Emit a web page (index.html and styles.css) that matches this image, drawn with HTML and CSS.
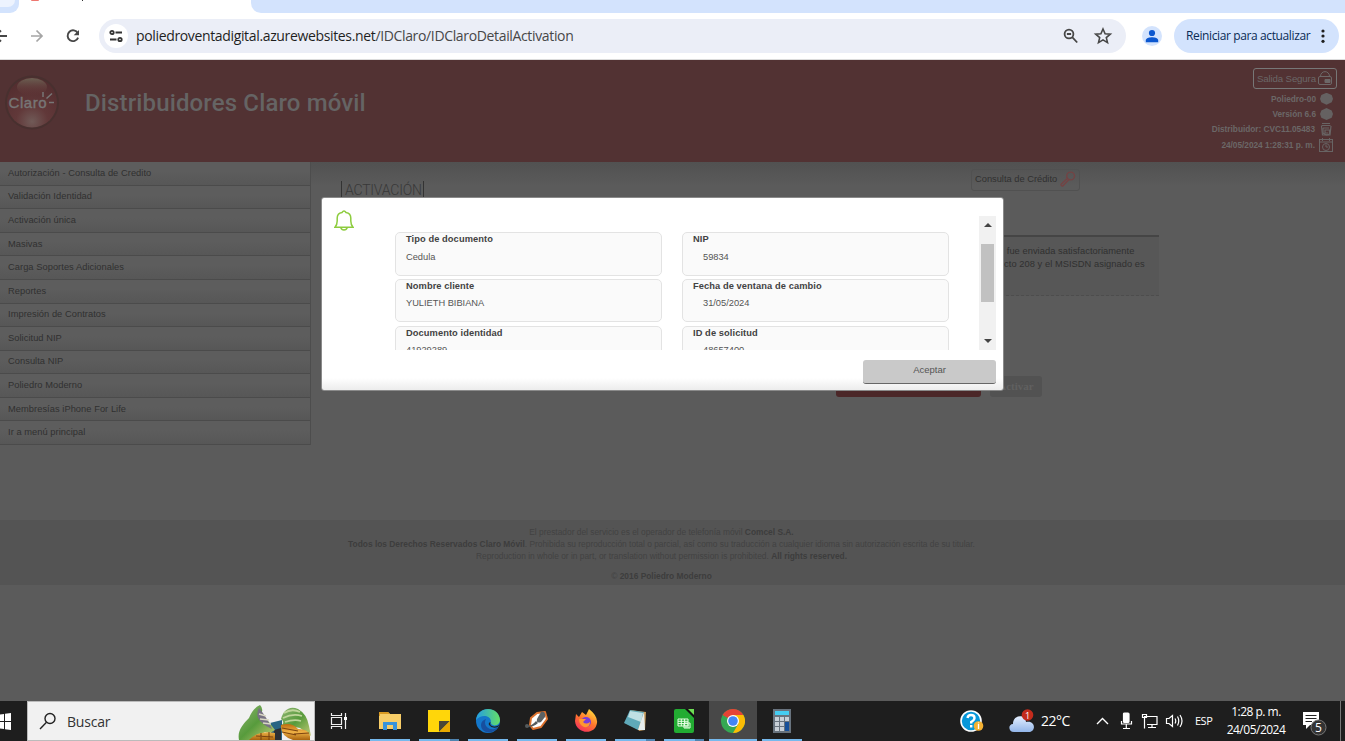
FILE: index.html
```html
<!DOCTYPE html>
<html lang="es">
<head>
<meta charset="utf-8">
<title>Poliedro</title>
<link rel="stylesheet" href="styles.css">
</head>
<body>
<div class="screen">
  <div class="tabs">
    <div class="tab-left"><i></i></div>
    <div class="tab-active"><i class="fav"></i><i class="descender"></i></div>
    <div class="tab-rest"></div>
  </div>
  <div class="toolbar">
    <svg class="nav" width="96" height="46" viewBox="0 0 96 46" fill="none" stroke="#474747" stroke-width="1.9">
      <path d="M-6 23H7M1 17.5L-4.500 23L1 28.500"/>
      <path d="M31 23H42M36.500 17.500L42 23L36.500 28.500" stroke="#a5a5a5" stroke-width="1.700"/>
      <path d="M77.800 20.200A5.400 5.400 0 1 0 78.100 24.600"/><path d="M79 17V22.300H73.700Z" fill="#474747" stroke="none"/>
    </svg>
    <div class="omnibox">
      <span class="site"><svg width="24" height="24" viewBox="0 0 24 24" fill="none" stroke="#333" stroke-width="1.800"><circle cx="8" cy="8.500" r="1.700"/><path d="M11.500 8.500H18M6 15.500H12.500"/><circle cx="16" cy="15.500" r="1.700"/></svg></span>
      <span class="url"><b>poliedroventadigital.azurewebsites.net</b>/IDClaro/IDClaroDetailActivation</span>
      <svg class="tools" width="52" height="20" viewBox="0 0 52 20" fill="none" stroke="#474747" stroke-width="1.800"><circle cx="8" cy="8" r="4.400"/><path d="M11.200 11.200L16.200 16.500M5.900 8H10.100"/><path d="M42 3L44.100 7.800L49.300 8.200L45.300 11.600L46.500 16.600L42 13.900L37.500 16.600L38.700 11.600L34.700 8.200L39.900 7.800Z" stroke-width="1.600"/></svg>
    </div>
    <svg class="profile" width="20" height="20" viewBox="0 0 20 20"><circle cx="10" cy="10" r="10" fill="#d3e3fd"/><circle cx="10" cy="7" r="3.100" fill="#0b57d0"/><path d="M3.800 16.200V14.500C3.800 12 7.600 11.300 10 11.300S16.200 12 16.200 14.500V16.200Z" fill="#0b57d0"/></svg>
    <div class="restart"><span>Reiniciar para actualizar</span><svg width="4" height="16" viewBox="0 0 4 16" fill="#1f1f1f"><circle cx="2" cy="3" r="1.600"/><circle cx="2" cy="8" r="1.600"/><circle cx="2" cy="13.300" r="1.600"/></svg></div>
  </div>

  <div class="page">
    <header class="head">
      <svg class="logo" width="60" height="60" viewBox="0 0 60 60">
        <defs>
          <radialGradient id="ball" cx=".5" cy=".88" r=".8"><stop offset="0" stop-color="#705a57"/><stop offset=".4" stop-color="#613839"/><stop offset="1" stop-color="#542e30"/></radialGradient>
          <linearGradient id="shine" x1="0" y1="0" x2="0" y2="1"><stop offset="0" stop-color="#6b6153"/><stop offset="1" stop-color="#673537" stop-opacity="0"/></linearGradient>
        </defs>
        <circle cx="32" cy="30.500" r="27" fill="#48302f"/><circle cx="32" cy="30.500" r="25" fill="url(#ball)"/><ellipse cx="32" cy="15" rx="15" ry="9" fill="url(#shine)"/>
        <text x="8.500" y="35.500" class="logo-text" textLength="38">Claro</text><path d="M43 20V25M46.500 26.500L52 21.500M49 30.500H54" stroke="#777676" stroke-width="1.500"/>
      </svg>
      <h1 class="brand">Distribuidores Claro móvil</h1>
      <div class="session">
        <div class="exit"><span>Salida Segura</span><svg width="16" height="16" viewBox="0 0 16 16" fill="none" stroke="#6d6868"><rect x="1.500" y="6.500" width="13" height="8" rx="1.500"/><path d="M3.500 6.500C3.500 0 12.500 0 12.500 6.500"/><path d="M8 9.500H13V12.500H8Z" fill="#6d6868"/></svg></div>
        <div class="line"><span>Poliedro-00</span><i class="hex"></i></div>
        <div class="line"><span>Versión 6.6</span><i class="hex"></i></div>
        <div class="line dist"><span>Distribuidor: CVC11.05483</span><svg width="14" height="14" viewBox="0 0 14 14" fill="none" stroke="#686464" stroke-width="1.200"><path d="M3 1.500H11M2.500 3.500H11.500M4 6H10M4 6V11Q7 14 10.500 12V8H6V11H9"/><path d="M2.500 4L3.500 13H11L12 4"/></svg></div>
        <div class="line date"><span>24/05/2024 1:28:31 p. m.</span><svg width="14" height="14" viewBox="0 0 14 14" fill="none" stroke="#686464"><rect x=".5" y="1.500" width="13" height="12"/><path d="M1 4H13M3.500 0V3M10.500 0V3M7 6.500V9H9"/><circle cx="7" cy="9" r="3.500"/></svg></div>
      </div>
    </header>

    <div class="body">
      <nav class="menu">
        <a>Autorización - Consulta de Credito</a><a>Validación Identidad</a><a>Activación única</a><a>Masivas</a><a>Carga Soportes Adicionales</a><a>Reportes</a><a>Impresión de Contratos</a><a>Solicitud NIP</a><a>Consulta NIP</a><a>Poliedro Moderno</a><a>Membresías iPhone For Life</a><a>Ir a menú principal</a>
      </nav>
      <main class="main">
        <div class="main-top">
          <h2 class="title">ACTIVACIÓN</h2>
          <div class="credit"><span>Consulta de Crédito</span><svg width="16" height="16" viewBox="0 0 16 16" fill="none" stroke="#744344" stroke-width="1.400"><circle cx="10.600" cy="5" r="3.900"/><path d="M7.500 7.200L1 13.200Q1 15.500 3 14.800L9 8.500"/></svg></div>
        </div>
        <div class="notice"><p>l fue enviada satisfactoriamente</p><p>icto 208 y el MSISDN asignado es</p></div>
        <div class="actions"><div class="red-button"></div><div class="activate">Activar</div></div>
      </main>
    </div>
    <footer class="foot">
      <p class="f1">El prestador del servicio es el operador de telefonía móvil <b>Comcel S.A.</b></p>
      <p class="f2"><b>Todos los Derechos Reservados Claro Móvil</b>. Prohibida su reproducción total o parcial, así como su traducción a cualquier idioma sin autorización escrita de su titular.</p>
      <p class="f3">Reproduction in whole or in part, or translation without permission is prohibited. <b>All rights reserved.</b></p>
      <p class="copy">© <b>2016 Poliedro Moderno</b></p>
    </footer>
  </div>

  <div class="taskbar">
    <div class="start"><svg width="12" height="17" viewBox="0 0 12 17" fill="#fff"><path d="M0 1.500L4 1V8H0ZM5 .8L11 0V8H5ZM0 9H4V16L0 15.500ZM5 9H11V17L5 16.200Z"/></svg></div>
    <div class="search">
      <svg width="18" height="18" viewBox="0 0 18 18" fill="none" stroke="#222" stroke-width="1.400"><circle cx="11" cy="6.500" r="5"/><path d="M7.500 10.300L1 17"/></svg>
      <span>Buscar</span>
      <svg class="art" width="74" height="36" viewBox="0 0 74 36">
        <defs><linearGradient id="leaf" x1="0" y1="0" x2="1" y2="1"><stop stop-color="#90b573"/><stop offset=".5" stop-color="#579b3c"/><stop offset="1" stop-color="#c6cc77"/></linearGradient><linearGradient id="gold" x1="0" y1="0" x2="0" y2="1"><stop stop-color="#bd6d10"/><stop offset=".5" stop-color="#efb246"/><stop offset="1" stop-color="#a9640f"/></linearGradient></defs>
        <path d="M32 19L44 16L44 36H33Z" fill="#286583"/><path d="M36 26L43 24V36H36Z" fill="#2b2f35"/>
        <path d="M1 36C-1 27 5 20 11 14Q15 4 22 1Q26 5 23 10Q31 17 37 26Q32 30 27 28L14 36Z" fill="url(#leaf)"/>
        <path d="M21 4Q28 12 34 25Q27 22 22 17Q17 11 21 4Z" fill="#777283"/><path d="M21 10L28 12M22 15L31 16M25 19L33 20" stroke="#d9d7c4" stroke-width="1.600"/>
        <path d="M43 15C45 7 51 1 60 5Q69 10 71 22L73 32L62 24Q52 22 44 21Q47 18 43 15Z" fill="url(#leaf)"/><path d="M46 9Q54 4 62 8M45 14Q55 9 64 12M47 18Q56 15 63 17" fill="none" stroke="#bfd59b" stroke-width="1.800"/>
        <path d="M11 36Q20 26 37 29V36ZM43 21Q54 18 60 25Q71 25 72 32V36H55Q42 32 43 21Z" fill="url(#gold)"/><path d="M44 24L60 27M44 28L58 31M18 32L35 33M56 30L71 29M23 29V36M31 28V36" stroke="#7d4511" stroke-width="1.100"/>
      </svg>
    </div>
    <div class="app view"><svg width="18" height="18" viewBox="0 0 18 18" fill="none" stroke="#eee" stroke-width="1.200"><path d="M1.500 1V3.500H11.500V1M1.500 17V14.500H11.500V17M1.500 5.500H11.500V12.500H1.500ZM15.500 1V17"/><path d="M14 5H17V8H14Z" fill="#fff" stroke="none"/></svg></div>
    <div class="apps">
      <div class="app on"><svg width="24" height="24" viewBox="0 0 24 24"><path d="M1 3H10L12 5H23V20H1Z" fill="#f7cd68"/><path d="M1 3H10L12 5H2V7H1Z" fill="#d99a22"/><path d="M5 13H19V21H15V16H9V21H5Z" fill="#3893db"/></svg></div>
      <div class="app on multi"><svg width="24" height="24" viewBox="0 0 24 24"><path d="M1 1H23V23H1Z" fill="#ffd60a"/><path d="M12 23V12H23Z" fill="#4a4636"/><path d="M12 23L23 12V23Z" fill="#e9a900"/></svg></div>
      <div class="app on"><svg width="24" height="24" viewBox="0 0 24 24"><defs><linearGradient id="edge"><stop stop-color="#239de3"/><stop offset="1" stop-color="#65df66"/></linearGradient></defs><circle cx="12" cy="12" r="12" fill="#1477ca"/><path d="M0 11C2-4 23-3 24 11C24 18 13 18 15 12C14 6 5 5 0 11Z" fill="url(#edge)"/><path d="M10 10C6 17 15 24 22 18C18 26 5 25 5 16C5 13 7 11 10 10Z" fill="#174f9f"/><path d="M14.500 13Q13 17 18 17.500Q21 18 23.500 15.500L22 18Q16 20 13 16Q12 14 14.500 13Z" fill="#202020"/></svg></div>
      <div class="app on"><svg width="26" height="24" viewBox="0 0 26 24"><path d="M6 16L7 9L13 4L21 3L23 10L17 18L9 20Z" fill="#fff" stroke="#dc722f" stroke-width="2" stroke-linejoin="round"/><path d="M17 3Q22 2 21 8L17 13Q12 15 13 10Z" fill="#5c6265"/><path d="M3 17Q8 17 12 12L14 14Q10 18 3 18Z" fill="#555a5c"/><circle cx="3" cy="17" r="2" fill="#555a5c"/></svg></div>
      <div class="app on"><svg width="24" height="24" viewBox="0 0 24 24"><defs><linearGradient id="fox" x1=".8" y1="0" x2=".2" y2="1"><stop stop-color="#ffe03c"/><stop offset=".5" stop-color="#ff762d"/><stop offset="1" stop-color="#f32b61"/></linearGradient></defs><path d="M1 12L2 5L5 8L8 3L12 6L15 0Q24 7 23 14C21 27 2 25 1 12Z" fill="url(#fox)"/><circle cx="12" cy="13" r="5" fill="#783cda"/><path d="M5 10L12 10L9 13Q12 16 16 13Q16 19 10 18Q5 16 5 10Z" fill="#ff9730"/></svg></div>
      <div class="app on multi"><svg width="24" height="24" viewBox="0 0 24 24"><path d="M7 1L23 3L22 21L16 22Z" fill="#c69b5b"/><path d="M7 1L21 3L15 21L1 14Z" fill="#5fa9b9"/><path d="M7 2L20 4L18 13L5 8Z" fill="#bfe0e4"/><path d="M21 3L22 21L15 21Z" fill="#e6eeee"/></svg></div>
      <div class="app on multi"><svg width="24" height="24" viewBox="0 0 24 24"><rect x="2" width="20" height="24" rx="2" fill="#22ac32"/><path d="M13 0H22V9Z" fill="#111"/><path d="M16 0H22V6Z" fill="#6ede55"/><path d="M6 10H16V17H6ZM6 12.300H16M6 14.600H16M9.300 10V17M12.600 10V17M12 14H18V19H12ZM14 16V19M16 15V19" fill="none" stroke="#e9ffe5"/></svg></div>
      <div class="app on current"><svg width="24" height="24" viewBox="0 0 24 24"><circle cx="12" cy="12" r="12" fill="#35a853"/><path d="M12 12L1.600 6A12 12 0 0 1 22.400 6Z" fill="#e54335"/><path d="M12 6H22.400A12 12 0 0 1 12 24L17.200 15Z" fill="#fbbc05"/><circle cx="12" cy="12" r="6" fill="#fff"/><circle cx="12" cy="12" r="4.800" fill="#4285f4"/></svg></div>
      <div class="app on"><svg width="24" height="24" viewBox="0 0 24 24"><rect x="3" width="18" height="24" fill="#68737e"/><rect x="5" y="2" width="14" height="4" fill="#45cdf2"/><path d="M5 8H9V12H5ZM10 8H14V12H10ZM15 8H19V12H15ZM5 13H9V17H5ZM10 13H14V17H10ZM5 18H9V22H5ZM10 18H14V22H10Z" fill="#c8d0d8"/><path d="M15 13H19V22H15Z" fill="#17509a"/></svg></div>
    </div>
    <div class="tray">
      <svg class="help" width="24" height="23" viewBox="0 0 24 23"><circle cx="11" cy="11" r="10" fill="#0797d9" stroke="#fff" stroke-width="1.600"/><path d="M7.500 8Q8 5 11 5Q14.500 5 14.500 8Q14.500 10 11.200 12V13.500M11.200 15V17.500" fill="none" stroke="#fff" stroke-width="2.400"/><circle cx="18.500" cy="16" r="4.800" fill="#f4b132"/><path d="M18.500 14V19M18.500 12.500V13.300" stroke="#fff" stroke-width="1.300"/></svg>
      <svg class="cloud" width="26" height="24" viewBox="0 0 26 24"><defs><linearGradient id="cloud" x1="0" y1="0" x2="0" y2="1"><stop stop-color="#e4efff"/><stop offset="1" stop-color="#93b6e9"/></linearGradient></defs><path d="M5 23C-1 23-1 15 4 15C4 5 17 5 17 13C27 11 27 23 20 23Z" fill="url(#cloud)"/><circle cx="18.500" cy="6" r="5.800" fill="#c42b1c"/><text x="16.100" y="9.500" class="badge-text">1</text></svg>
      <span class="temp">22°C</span>
      <svg class="sys" width="88" height="18" viewBox="0 0 88 18" fill="none" stroke="#fff" stroke-width="1.200"><path d="M1 12L6.500 6.500L12 12" stroke-width="1.400"/><rect x="27.500" y="1" width="5.500" height="9.500" rx="1" fill="#fff"/><path d="M25.500 9V12H35.500V9M30.300 12V16M27 16.500H34"/><path d="M48.500 7.500V4.500H61V12.500H51M46.500 2.500H50.500V5.500H46.500ZM48.500 6V16.500M56 12.500V15.500M52 15.500H60"/><path d="M70.500 6.500H73L76.500 3.500V14.500L73 11.500H70.500ZM79 6.500Q80.500 9 79 11.500M81.500 4.500Q84 9 81.500 13.500M84 3Q88 9 84 15"/></svg>
      <span class="lang">ESP</span>
      <div class="clock"><span>1:28 p. m.</span><span>24/05/2024</span></div>
      <svg class="notif" width="26" height="26" viewBox="0 0 26 26"><path d="M1 1H17V14H8L4 18V14H1Z" fill="#fff"/><path d="M3.500 4.500H14.500M3.500 7.500H14.500M3.500 10.500H10" stroke="#222"/><circle cx="16.500" cy="16.500" r="7.500" fill="#333" stroke="#777"/><text x="13.100" y="20.800" class="five">5</text></svg>
      <i class="desk"></i>
    </div>
  </div>

  <section class="modal">
    <div class="modal-top">
      <svg class="bell" width="20" height="21" viewBox="0 0 20 21" fill="none" stroke="#8dcc3e" stroke-width="1.500"><path d="M1 17.300H19Q16.800 14.500 16.800 11V8C16.800 5 14.500 3 12 2.500Q10-.3 8 2.500C5.500 3 3.200 5 3.200 8V11Q3.200 14.500 1 17.300Z"/><path d="M6.700 17.500Q7.500 20 10 20T13.300 17.500"/></svg>
      <div class="scroll">
        <div class="fields">
          <div class="field tall"><b>Tipo de documento</b><span>Cedula</span></div><div class="field tall in"><b>NIP</b><span>59834</span></div>
          <div class="field"><b>Nombre cliente</b><span>YULIETH BIBIANA</span></div><div class="field in"><b>Fecha de ventana de cambio</b><span>31/05/2024</span></div>
          <div class="field"><b>Documento identidad</b><span>41929289</span></div><div class="field in"><b>ID de solicitud</b><span>48657400</span></div>
        </div>
        <div class="bar"><i class="up"></i><i class="thumb"></i><i class="down"></i></div>
      </div>
    </div>
    <button class="accept">Aceptar</button>
  </section>
</div>
</body>
</html>
```
FILE: styles.css
```css
*{box-sizing:border-box}
body,h1,h2,p{margin:0}
body{font-family:"Liberation Sans",Arial,sans-serif;overflow:hidden}
svg{display:block;flex:none}
span,a,p,h1,h2,b{white-space:nowrap}
.screen{position:relative;width:1345px;height:741px;display:flex;flex-direction:column}
.tabs{height:13px;display:flex;background:#fff;flex:none}
.tab-left{width:19px;background:#d3e3fd;border-bottom-right-radius:9px}
.tab-left i{display:block;width:15px;height:7px;background:#edf3fe;border-bottom-right-radius:9px}
.tab-active{width:232px;display:flex;gap:43px;padding-left:12px}
.fav{width:8px;height:1px;background:#ee7770;border-radius:0 0 4px 4px}
.descender{width:1px;height:1px;background:#333}
.tab-rest{flex:1;background:#d3e3fd;border-bottom-left-radius:10px}
.toolbar{height:47px;display:flex;align-items:center;border-bottom:1px solid #dcdcdc;background:#fff;flex:none;font-family:"Open Sans","Noto Sans",sans-serif}
.nav{margin-right:3px}
.omnibox{width:1027px;height:34px;border-radius:17px;background:#ebeef7;display:flex;align-items:center;padding:0 13px 0 5px}
.site{background:#fff;border-radius:50%;width:24px;height:24px}
.url{font-size:14px;letter-spacing:-.35px;color:#474747;margin-left:8px;flex:1;padding-bottom:1px}
.url b{font-weight:400;color:#1f1f1f}
.profile{margin-left:16px}
.restart{width:165px;height:34px;border-radius:17px;background:#d3e3fd;margin-left:12px;padding:0 14px 1px 12px;display:flex;align-items:center;justify-content:space-between;font-size:12px;letter-spacing:-.38px;color:#0a2b55}
.page{height:641px;background:#5b5b5b;flex:none}
.head{height:102px;background:#523233;display:flex;padding:0 8px 0 0}
.logo{margin-top:12px}
.logo-text{font:15px "Liberation Sans",Arial,sans-serif;fill:#777676;stroke:#777676;stroke-width:.4px}
.brand{font:500 24px/32px Roboto,sans-serif;letter-spacing:.14px;color:#656464;margin:27px 0 0 25px;flex:1}
.session{display:flex;flex-direction:column;align-items:flex-end;padding-top:8px;font-weight:700;font-size:8.300px;letter-spacing:-.02px;color:#6b6767}
.exit{width:84px;height:21px;border:1px solid #777;border-radius:3px;display:flex;align-items:center;justify-content:space-between;padding:0 3px 1px 3px;font-size:9.700px;letter-spacing:-.15px;font-weight:400;margin-bottom:2px}
.line{height:15.400px;display:flex;align-items:center;gap:4px;margin-right:4px}
.hex{width:13px;height:12px;background:#656161;clip-path:polygon(50% 0,90% 20%,100% 50%,90% 80%,50% 100%,10% 80%,0 50%,10% 20%)}
.body{height:358px;display:flex}
.menu{width:311px;height:283px;display:grid;grid-template-rows:repeat(12,1fr);border-right:1px solid #4d4d4d;flex:none}
.menu a{padding:0 0 1px 8px;display:flex;align-items:center;font-size:9.300px;letter-spacing:.05px;color:#303030;border-bottom:1px solid #4b4b4b;background:linear-gradient(#5d5d5d 40%,#575757)}
.main{flex:1;padding-left:30px;background:linear-gradient(#515151,#5b5b5b 24px)}
.main-top{height:73px;display:flex;align-items:flex-start}
.title{font:300 14px/18px Roboto,sans-serif;color:#383838;border:solid #333;border-width:0 1px;padding:0 3px;width:83px;margin-top:19px;letter-spacing:-.2px}
.credit{margin:7px 0 0 547px;width:109px;height:22px;border:1px solid #515151;border-radius:3px;display:flex;align-items:center;justify-content:space-between;padding:0 3px 2px 3px;font-size:9.300px;letter-spacing:0;color:#303030}
.notice{height:61px;width:818px;background:#575757;border-top:2px solid #454545;border-bottom:1px dashed #4d4d4d;padding:8px 0 0 661px;font-size:9.300px;line-height:13px;letter-spacing:.05px;color:#303030}
.actions{display:flex;gap:9px;margin:80px 0 0 495px}
.red-button{width:145px;height:21px;border-radius:3px;background:#4b2728}
.activate{width:52px;height:21px;background:#525252;border-radius:3px;font:bold 11px/21px "Liberation Serif",serif;color:#606060;text-align:center}
.foot{height:65px;background:#545454;color:#424242;font-size:8.400px;line-height:12px;padding:6px 22px 0 0;display:flex;flex-direction:column;align-items:center}
.foot b{color:#3d3d3d}
.copy{margin-top:8px}
.taskbar{height:40px;display:flex;background:#1e1e1e;color:#fff;flex:none;font-family:"Open Sans","Noto Sans",sans-serif}
.start{width:27px;display:flex;align-items:center}
.search{width:288px;background:#f1f1f1;border:1px solid #bbb;display:flex;align-items:center;padding-left:11px;color:#333;font-size:14px}
.search span{margin-left:10px;flex:1;letter-spacing:-.2px}
.art{align-self:flex-end;margin-right:2px}
.app{width:48px;height:40px;display:flex;align-items:center;justify-content:center;flex:none}
.apps{display:flex;gap:1px;margin-left:3px}
.on{background:linear-gradient(#76b9ed,#76b9ed) center bottom/40px 2px no-repeat}
.multi{background:linear-gradient(90deg,#76b9ed 31px,#4f84b0 31px) center bottom/40px 2px no-repeat}
.current{background:linear-gradient(#484848 38px,#76b9ed 38px)}
.tray{flex:1;display:flex;align-items:center;font-size:12px}
.help{margin-left:154px}
.cloud{margin-left:25px}
.badge-text{font:9px "Open Sans",sans-serif;fill:#fff}
.temp{font-size:14px;letter-spacing:-.5px;width:55px;margin-left:6px;padding-bottom:2px}
.sys{flex:none}
.lang{width:18px;margin-left:11px;font-size:11px;letter-spacing:-.5px;padding-bottom:1px}
.clock{width:64px;margin-left:11px;display:flex;flex-direction:column;align-items:center;line-height:18px;letter-spacing:-.5px;padding-bottom:1px}
.notif{margin:6px 0 0 14px}
.five{font:12px "Open Sans",sans-serif;fill:#fff}
.desk{width:1px;height:40px;background:#777;margin-left:auto;margin-right:4px}
.modal{position:absolute;left:321px;top:197px;width:683px;height:194px;border:1px solid #8a8a8a;border-radius:3px;background:linear-gradient(#fff 180px,#ececec);display:flex;flex-direction:column;padding:18px 7px 6px 12px}
.modal-top{display:flex;height:134px}
.bell{margin:-6px 0 0 -.5px}
.scroll{height:134px;overflow:hidden;margin-left:41.500px;display:flex;flex:1}
.fields{display:grid;grid-template-columns:267px 267px;grid-template-rows:44px 43px 44px;column-gap:20px;row-gap:3px;padding-top:16px;flex:1}
.field{border:1px solid #e3e3e3;border-radius:5px;background:#fafafa;padding:0 10px;font-size:9.300px;line-height:12px;color:#555;display:flex;flex-direction:column;gap:4.500px;letter-spacing:-.02px}
.field:nth-last-child(-n+2){margin-top:1px}
.field b{color:#424242;letter-spacing:.08px}
.field.tall{gap:6px}
.in span{padding-left:10px}
.bar{width:17px;background:#f1f1f1;display:flex;flex-direction:column;align-items:center}
.up{border:solid transparent;border-width:0 4px 4px;border-bottom-color:#444;margin-top:7px}
.thumb{width:13px;height:58px;background:#c1c1c1;margin-top:17px}
.down{border:solid transparent;border-width:4px 4px 0;border-top-color:#444;margin:auto 0 7px}
.accept{width:133px;height:24px;margin:10px 0 0 auto;border:0;border-bottom:1px solid #666;border-radius:3px;background:#c9c9c9;color:#555;font:9.500px/12px "Liberation Sans",Arial,sans-serif;padding:0 0 3px}
```
